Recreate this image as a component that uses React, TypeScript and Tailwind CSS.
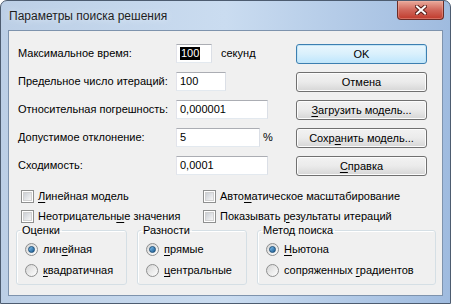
import type { ReactNode } from "react";

const font = "[font-family:'Liberation_Sans',Arial,sans-serif]";

function Acc({ children }: { children: ReactNode }) {
  return <span className="underline underline-offset-[2px] decoration-1">{children}</span>;
}

function TextBox({ width, children, selected }: { width: string; children: ReactNode; selected?: boolean }) {
  return (
    <div
      className={`flex h-[19px] items-center border border-[#abadb3] border-l-[#e2e3ea] border-r-[#dbdfe6] border-b-[#e3e9ef] bg-white pl-[3px] ${width}`}
    >
      {selected ? (
        <span className="bg-black px-[1px] leading-[13px] text-white">{children}</span>
      ) : (
        <span>{children}</span>
      )}
    </div>
  );
}

function Button({ children, primary }: { children: ReactNode; primary?: boolean }) {
  return (
    <div
      className={`flex h-[20px] w-[131px] items-center justify-center rounded-[3px] border ${
        primary
          ? "border-[#3c7fb1] bg-gradient-to-b from-[#eaf6fd] via-[#d9f0fc] to-[#bee6fd] shadow-[inset_0_0_0_1px_#c4e5f6]"
          : "border-[#707070] bg-gradient-to-b from-[#f2f2f2] via-[#ebebeb] to-[#d6d6d6] shadow-[inset_0_0_0_1px_#fcfcfc]"
      }`}
    >
      {children}
    </div>
  );
}

function Check({ children }: { children: ReactNode }) {
  return (
    <div className="flex h-[20px] items-center gap-[4px]">
      <span className="flex h-[13px] w-[13px] items-center justify-center border border-[#8e8f8f] bg-white">
        <span className="h-[9px] w-[9px] border border-[#d0d0d0] bg-gradient-to-br from-[#cbcfd5] to-[#f6f6f6]" />
      </span>
      <span>{children}</span>
    </div>
  );
}

function Radio({ children, on }: { children: ReactNode; on?: boolean }) {
  return (
    <div className="flex h-[21px] items-center gap-[5px]">
      <span className="flex h-[13px] w-[13px] items-center justify-center rounded-full border border-[#8e8f8f] bg-gradient-to-br from-[#d5d5d5] to-[#ffffff]">
        {on && (
          <span className="h-[7px] w-[7px] rounded-full border border-[#1d4f78] bg-gradient-to-br from-[#7fc1ef] to-[#155a92]" />
        )}
      </span>
      <span>{children}</span>
    </div>
  );
}

function Group({ title, width, children }: { title: string; width: string; children: ReactNode }) {
  return (
    <fieldset
      className={`rounded-[3px] border border-[#d5dfe5] px-[8px] pb-[3px] pt-[2px] shadow-[inset_1px_1px_0_#fff] ${width}`}
    >
      <legend className="ml-[-5px] px-[2px] leading-[13px]">{title}</legend>
      {children}
    </fieldset>
  );
}

export default function App() {
  const rows: { label: ReactNode; box: ReactNode; extra?: ReactNode }[] = [
    {
      label: "Максимальное время:",
      box: (
        <TextBox width="w-[36px]" selected>
          100
        </TextBox>
      ),
      extra: <span className="ml-[9px]">секунд</span>,
    },
    { label: "Предельное число итераций:", box: <TextBox width="w-[50px]">100</TextBox> },
    { label: "Относительная погрешность:", box: <TextBox width="w-[92px]">0,000001</TextBox> },
    {
      label: "Допустимое отклонение:",
      box: <TextBox width="w-[84px]">5</TextBox>,
      extra: <span className="ml-[3px]">%</span>,
    },
    { label: "Сходимость:", box: <TextBox width="w-[92px]">0,0001</TextBox> },
  ];

  return (
    <div
      className={`flex h-[304px] w-[451px] flex-col overflow-hidden rounded-t-[7px] border border-[#4d5c70] bg-gradient-to-r from-[#bccfe6] via-[#cadcf0] to-[#9fbbdf] text-[11px] text-black ${font}`}
    >
      <div className="flex h-[29px] shrink-0 items-start justify-between pl-[8px] pr-[6px]">
        <span className="mt-[8px] text-[12px] leading-[15px] text-[#1e1e1e] [text-shadow:0_0_6px_#e8f0fa]">
          Параметры поиска решения
        </span>
        <div className="flex h-[19px] w-[47px] items-center justify-center rounded-b-[4px] border border-t-0 border-[#6c2c26] bg-gradient-to-b from-[#e9a99b] via-[#d0665a] to-[#c0392b] shadow-[inset_0_0_0_1px_#f2b8ad66]">
          <svg width="12" height="10" viewBox="0 0 12 10">
            <path d="M2 1.5 L10 8.5 M10 1.5 L2 8.5" stroke="#5a1e18" strokeWidth="4" strokeLinecap="square" />
            <path d="M2 1.5 L10 8.5 M10 1.5 L2 8.5" stroke="#ffffff" strokeWidth="2" strokeLinecap="square" />
          </svg>
        </div>
      </div>

      <div className="mx-[7px] mb-[7px] flex flex-1 flex-col border border-[#7e93ad] bg-[#f0f0f0]">
        <div className="flex pl-[9px] pt-[8px]">
          <div className="w-[278px]">
            {rows.map((r, i) => (
              <div key={i} className="flex h-[28px] items-center">
                <span className="w-[158px]">{r.label}</span>
                {r.box}
                {r.extra}
              </div>
            ))}
          </div>
          <div className="mt-[5px] flex flex-col gap-[8px]">
            <Button primary>OK</Button>
            <Button>Отмена</Button>
            <Button>
              <span>
                <Acc>З</Acc>агрузить модель...
              </span>
            </Button>
            <Button>
              <span>
                Сохр<Acc>а</Acc>нить модель...
              </span>
            </Button>
            <Button>
              <span>
                <Acc>С</Acc>правка
              </span>
            </Button>
          </div>
        </div>

        <div className="mt-[7px] flex pl-[12px]">
          <div className="w-[182px]">
            <Check>
              <Acc>Л</Acc>инейная модель
            </Check>
            <Check>
              Неотрицательн<Acc>ы</Acc>е значения
            </Check>
          </div>
          <div>
            <Check>
              Авто<Acc>м</Acc>атическое масштабирование
            </Check>
            <Check>
              Показывать <Acc>р</Acc>езультаты итераций
            </Check>
          </div>
        </div>

        <div className="mt-[-2px] flex gap-[10px] pl-[7px]">
          <Group title="Оценки" width="w-[111px]">
            <Radio on>
              лин<Acc>е</Acc>йная
            </Radio>
            <Radio>
              <Acc>к</Acc>вадратичная
            </Radio>
          </Group>
          <Group title="Разности" width="w-[110px]">
            <Radio on>
              <Acc>п</Acc>рямые
            </Radio>
            <Radio>
              <Acc>ц</Acc>ентральные
            </Radio>
          </Group>
          <Group title="Метод поиска" width="w-[179px]">
            <Radio on>
              <Acc>Н</Acc>ьютона
            </Radio>
            <Radio>
              сопряженных <Acc>г</Acc>радиентов
            </Radio>
          </Group>
        </div>
      </div>
    </div>
  );
}
